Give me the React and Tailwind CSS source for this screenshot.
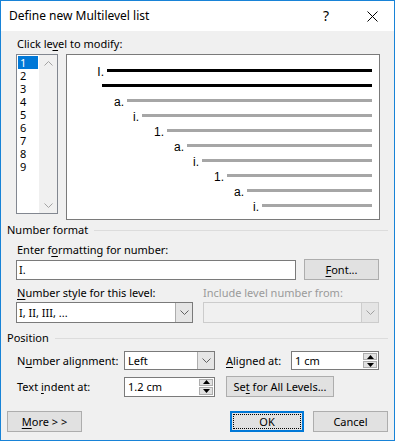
import React from "react";

function ChevDown({ className }) {
  return (
    <svg width="9" height="5" viewBox="0 0 9 5" className={className}>
      <path d="M0.5 0.5 L4.5 4.5 L8.5 0.5" fill="none" stroke="currentColor" strokeWidth="1" />
    </svg>
  );
}
function ChevUp({ className }) {
  return (
    <svg width="9" height="5" viewBox="0 0 9 5" className={className}>
      <path d="M0.5 4.5 L4.5 0.5 L8.5 4.5" fill="none" stroke="currentColor" strokeWidth="1" />
    </svg>
  );
}
function TriUp() {
  return (
    <svg width="7" height="4" viewBox="0 0 7 4">
      <path d="M0 4 L3.5 0 L7 4 Z" fill="#000" />
    </svg>
  );
}
function TriDown() {
  return (
    <svg width="7" height="4" viewBox="0 0 7 4">
      <path d="M0 0 L3.5 4 L7 0 Z" fill="#000" />
    </svg>
  );
}

function U({ children }) {
  return <span className="underline underline-offset-[2px] decoration-1">{children}</span>;
}

function Combo({ className, text, disabled }) {
  return (
    <div
      className={`flex border ${
        disabled ? "border-[#cccccc] bg-[#f0f0f0]" : "border-[#7a7a7a] bg-white"
      } ${className}`}
    >
      <div className="flex-1 flex items-center pl-[2px] whitespace-nowrap overflow-hidden">
        <span>{text}</span>
      </div>
      <div
        className={`w-[17px] flex items-center justify-center border-l ${
          disabled ? "border-[#cccccc] bg-[#e5e5e5] text-[#a0a0a0]" : "border-[#adadad] bg-[#e5e5e5] text-[#606060]"
        }`}
      >
        <ChevDown />
      </div>
    </div>
  );
}

function Spinner({ className, text }) {
  return (
    <div className={`flex border border-[#7a7a7a] bg-white ${className}`}>
      <div className="flex-1 flex items-center pl-[3px] whitespace-nowrap">
        <span>{text}</span>
      </div>
      <div className="w-[15px] flex flex-col py-[1px] pr-[1px] gap-[1px]">
        <div className="flex-1 flex items-center justify-center bg-[#e1e1e1] border border-[#adadad]">
          <TriUp />
        </div>
        <div className="flex-1 flex items-center justify-center bg-[#e1e1e1] border border-[#adadad]">
          <TriDown />
        </div>
      </div>
    </div>
  );
}

function Btn({ className, children }) {
  return (
    <div
      className={`flex items-center justify-center bg-[#e1e1e1] border border-[#adadad] whitespace-nowrap ${className}`}
    >
      <span>{children}</span>
    </div>
  );
}

const rows = [
  { label: "I.", w: "w-[40px]", line: "bg-black" },
  { label: "", w: "w-[35px]", line: "bg-black" },
  { label: "a.", w: "w-[60px]", line: "bg-[#a6a6a6]" },
  { label: "i.", w: "w-[75px]", line: "bg-[#a6a6a6]" },
  { label: "1.", w: "w-[100px]", line: "bg-[#a6a6a6]" },
  { label: "a.", w: "w-[120px]", line: "bg-[#a6a6a6]" },
  { label: "i.", w: "w-[135px]", line: "bg-[#a6a6a6]" },
  { label: "1.", w: "w-[160px]", line: "bg-[#a6a6a6]" },
  { label: "a.", w: "w-[180px]", line: "bg-[#a6a6a6]" },
  { label: "i.", w: "w-[195px]", line: "bg-[#a6a6a6]" },
];

const levels = [1, 2, 3, 4, 5, 6, 7, 8, 9];

export default function App() {
  return (
    <div className="w-[395px] h-[441px] border border-[#1883d7] flex flex-col font-['Noto_Sans',sans-serif] text-[11px] leading-[16px] text-black overflow-hidden">
      {/* Title bar */}
      <div className="h-[30px] shrink-0 bg-white flex items-center">
        <span className="pl-[8px] flex-1 text-[12px]">Define new Multilevel list</span>
        <span className="text-[14px] mr-[38px]">?</span>
        <svg width="11" height="11" viewBox="0 0 11 11" className="mr-[16px]">
          <path d="M0.5 0.5 L10.5 10.5 M10.5 0.5 L0.5 10.5" stroke="#000" strokeWidth="1" fill="none" />
        </svg>
      </div>

      {/* Body */}
      <div className="flex-1 bg-[#f0f0f0] pl-[6px] pr-[6px] pt-[5px] flex flex-col">
        <div className="ml-[10px]">
          Click le<U>v</U>el to modify:
        </div>

        <div className="ml-[9px] mt-[2px] flex items-start gap-[8px]">
          {/* Level listbox */}
          <div className="w-[42px] h-[160px] border border-[#828790] bg-white flex text-[11px]">
            <div className="w-[22px] pt-[1px] pl-[1px]">
              {levels.map((n) => (
                <div
                  key={n}
                  className={`h-[13px] leading-[13px] pl-[2px] ${
                    n === 1 ? "bg-[#0078d7] text-white w-[20px]" : ""
                  }`}
                >
                  {n}
                </div>
              ))}
            </div>
            <div className="flex-1 bg-[#f0f0f0] flex flex-col justify-between items-center pt-[6px] pb-[5px] text-[#a3a3a3]">
              <ChevUp />
              <ChevDown />
            </div>
          </div>

          {/* Preview */}
          <div className="w-[314px] h-[166px] border border-[#7a7a7a] bg-white pt-[8px] pr-[7px] flex flex-col font-['Liberation_Sans',sans-serif] text-[12px] text-black">
            {rows.map((r, i) => (
              <div key={i} className="h-[15px] flex items-center">
                <div className={`${r.w} text-right pr-[3px] leading-[12px] translate-y-[1px]`}>{r.label}</div>
                <div className={`flex-1 h-[3px] ${r.line}`} />
              </div>
            ))}
          </div>
        </div>

        {/* Number format header */}
        <div className="mt-[2px] flex items-center gap-[6px]">
          <span>Number format</span>
          <div className="flex-1 h-px bg-[#dcdcdc]" />
        </div>

        <div className="ml-[10px] mt-[4px]">
          Enter f<U>o</U>rmatting for number:
        </div>
        <div className="ml-[9px] mt-[1px] h-[21px] flex items-center">
          <div className="w-[280px] h-[20px] border border-[#7a7a7a] bg-white flex items-center pl-[2px]">
            <span>I.</span>
          </div>
          <Btn className="ml-[8px] w-[75px] h-[21px]">
            <U>F</U>ont...
          </Btn>
        </div>

        <div className="ml-[10px] mt-[5px] flex">
          <div className="w-[186px]">
            <U>N</U>umber style for this level:
          </div>
          <div className="text-[#9a9a9a]">Include level number from:</div>
        </div>
        <div className="ml-[9px] mt-[1px] flex gap-[10px]">
          <Combo className="w-[177px] h-[21px]" text="I, II, III, ..." />
          <Combo className="w-[176px] h-[21px]" text="" disabled />
        </div>

        {/* Position header */}
        <div className="mt-[7px] flex items-center gap-[6px]">
          <span>Position</span>
          <div className="flex-1 h-px bg-[#dcdcdc]" />
        </div>

        <div className="ml-[10px] mt-[5px] h-[19px] flex items-center">
          <div className="w-[107px] whitespace-nowrap">
            N<U>u</U>mber alignment:
          </div>
          <Combo className="w-[91px] h-[19px]" text={<span className="pl-[1px]">Left</span>} />
          <div className="ml-[11px] w-[65px] whitespace-nowrap">
            <U>A</U>ligned at:
          </div>
          <Spinner className="w-[88px] h-[19px]" text="1 cm" />
        </div>

        <div className="ml-[10px] mt-[6px] h-[21px] flex items-center">
          <div className="w-[107px] whitespace-nowrap">
            Text <U>i</U>ndent at:
          </div>
          <Spinner className="w-[91px] h-[20px]" text="1.2 cm" />
          <Btn className="ml-[11px] w-[108px] h-[21px]">
            Se<U>t</U> for All Levels...
          </Btn>
        </div>

        <div className="mt-[14px] flex items-center">
          <Btn className="w-[75px] h-[21px]">
            <U>M</U>ore &gt; &gt;
          </Btn>
          <div className="ml-auto w-[74px] h-[21px] bg-[#e1e1e1] border border-[#0078d7] shadow-[inset_0_0_0_1px_#0078d7] p-[2px]">
            <div className="w-full h-full border border-dotted border-black flex items-center justify-center">
              <span>OK</span>
            </div>
          </div>
          <Btn className="ml-[9px] w-[75px] h-[21px]">Cancel</Btn>
        </div>
      </div>
    </div>
  );
}
